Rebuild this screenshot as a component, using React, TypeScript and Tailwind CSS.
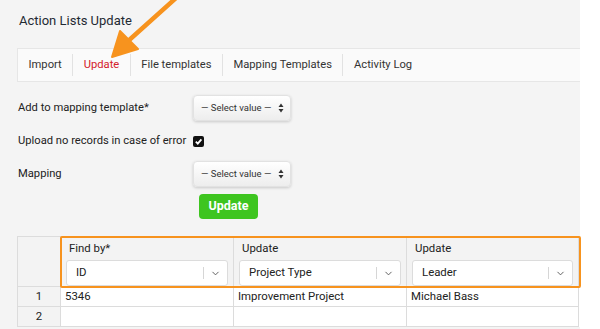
import { ChevronDown } from 'lucide-react'

const TABS = ['Import', 'Update', 'File templates', 'Mapping Templates', 'Activity Log'] as const

const COLUMNS = [
  { label: 'Find by*', value: 'ID' },
  { label: 'Update', value: 'Project Type' },
  { label: 'Update', value: 'Leader' },
] as const

const ROWS = [
  ['5346', 'Improvement Project', 'Michael Bass'],
  ['', '', ''],
]

function NativeSelect() {
  return (
    <div className="w-[98px] h-[26px] rounded-[4px] bg-gradient-to-b from-white to-[#ededed] shadow-[0_1px_3px_rgba(0,0,0,0.18)] border border-[#e2e2e2] flex items-center justify-between pl-[7px] pr-[6px] text-[9.5px] text-[#333]">
      <span>— Select value —</span>
      <svg width="6" height="10" viewBox="0 0 6 10" className="fill-[#333]">
        <path d="M3 0.5 L5.5 4 H0.5 Z" />
        <path d="M3 9.5 L5.5 6 H0.5 Z" />
      </svg>
    </div>
  )
}

export default function App() {
  return (
    <div className="relative w-[600px] h-[329px] overflow-hidden bg-white flex" style={{ fontFamily: 'Roboto, "Liberation Sans", sans-serif' }}>
      <div className="w-[580px] bg-[#f4f4f4] pl-[17px] flex flex-col">
        {/* Title */}
        <h1 className="text-[13px] text-[#1f2a33] leading-none mt-[14px] ml-[2px]">Action Lists Update</h1>

        {/* Tabs */}
        <div className="mt-[21px] h-[34px] bg-[#fafafa] border-y border-l border-[#e6e6e6] flex items-center">
          {TABS.map((t, i) => (
            <div key={t} className="flex items-center">
              <span className={`text-[11.2px] px-[10.5px] ${t === 'Update' ? 'text-[#d4202a]' : 'text-[#333]'}`}>{t}</span>
              {i < TABS.length - 1 && <span className="w-px h-[22px] bg-[#e2e2e2]" />}
            </div>
          ))}
        </div>

        {/* Form */}
        <div className="mt-[13px] flex flex-col text-[11.2px] text-[#222]">
          <div className="flex items-center h-[26px]">
            <span className="w-[176px] pl-[1px] whitespace-nowrap">Add to mapping template*</span>
            <NativeSelect />
          </div>
          <div className="flex items-center h-[16px] mt-[12px]">
            <span className="w-[176px] pl-[1px] whitespace-nowrap">Upload no records in case of error</span>
            <span className="w-[11px] h-[11px] rounded-[2px] bg-[#111] flex items-center justify-center">
              <svg width="9" height="9" viewBox="0 0 10 10" fill="none" stroke="white" strokeWidth="2">
                <path d="M2 5.2 L4.2 7.4 L8.2 2.6" />
              </svg>
            </span>
          </div>
          <div className="flex items-center h-[26px] mt-[12px]">
            <span className="w-[176px] pl-[1px] whitespace-nowrap">Mapping</span>
            <NativeSelect />
          </div>
          <div className="flex mt-[7px] pl-[182px]">
            <button className="w-[59px] h-[25px] rounded-[4px] bg-[#3ec520] text-white font-bold text-[12.5px]">Update</button>
          </div>
        </div>

        {/* Table */}
        <div className="relative mt-[17px] border-l border-t border-[#dcdcdc] bg-white text-[11.4px] text-[#222]">
          <div className="grid grid-cols-[43px_173px_173px_172px] bg-[#f3f3f3]">
            <div className="border-r border-b border-[#dcdcdc] h-[50px]" />
            {COLUMNS.map((c, i) => (
              <div key={i} className="border-r border-b border-[#dcdcdc] h-[50px] px-[5px] pt-[4px]">
                <div className="pl-[3px] leading-[14px]">{c.label}</div>
                <div className="mt-[5px] h-[26px] bg-white border border-[#dcdcdc] rounded-[3px] flex items-center pl-[9px] pr-[6px]">
                  <span className="flex-1">{c.value}</span>
                  <span className="w-px h-[12px] bg-[#d6d6d6] mr-[6px]" />
                  <ChevronDown size={11} className="text-[#555]" strokeWidth={2} />
                </div>
              </div>
            ))}
          </div>
          {ROWS.map((r, ri) => (
            <div key={ri} className="grid grid-cols-[43px_173px_173px_172px] h-[20px]">
              <div className="border-r border-b border-[#dcdcdc] bg-[#f3f3f3] flex items-center justify-center">{ri + 1}</div>
              {r.map((v, ci) => (
                <div key={ci} className="border-r border-b border-[#dcdcdc] flex items-center pl-[4px]">{v}</div>
              ))}
            </div>
          ))}
          {/* highlight around mapped headers */}
          <div className="absolute left-[42px] top-[-1px] w-[521px] h-[52px] border-[2.5px] border-[#f7931e] rounded-[2px] pointer-events-none" />
        </div>
      </div>

      {/* annotation arrow */}
      <svg className="absolute left-0 top-0 pointer-events-none" width="600" height="329">
        <path d="M176 -2 L127 42" stroke="#f7931e" strokeWidth="4.5" strokeLinecap="round" />
        <path d="M112 57 L120 31 L138 49 Z" fill="#f7931e" stroke="#f7931e" strokeWidth="2" strokeLinejoin="round" />
      </svg>
    </div>
  )
}
